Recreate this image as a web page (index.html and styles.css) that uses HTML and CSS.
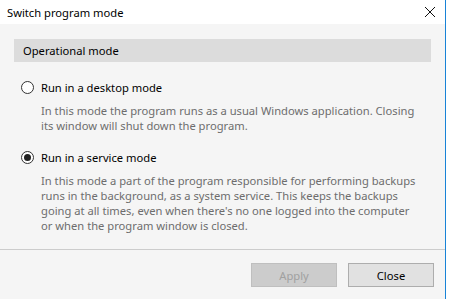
FILE: index.html
```html
<!DOCTYPE html>
<html>
<head>
  <meta charset="UTF-8">
  <title>Switch program mode</title>
  <link rel="stylesheet" href="styles.css">
</head>
<body>
  <div class="window">
    <div class="title-bar">
      <span class="title">Switch program mode</span>
      <svg class="close-x" width="12" height="12" viewBox="0 0 12 12">
        <path d="M1 1 L11 11 M11 1 L1 11" stroke="#111" stroke-width="1" fill="none"/>
      </svg>
    </div>

    <div class="content">
      <div class="section-header">Operational mode</div>

      <div class="option">
        <label class="radio-row">
          <span class="radio"></span>
          <span>Run in a desktop mode</span>
        </label>
        <p class="desc">In this mode the program runs as a usual Windows application. Closing<br>its window will shut down the program.</p>
      </div>

      <div class="option">
        <label class="radio-row">
          <span class="radio checked"></span>
          <span>Run in a service mode</span>
        </label>
        <p class="desc">In this mode a part of the program responsible for performing backups<br>runs in the background, as a system service. This keeps the backups<br>going at all times, even when there's no one logged into the computer<br>or when the program window is closed.</p>
      </div>
    </div>

    <div class="footer">
      <button class="btn" disabled>Apply</button>
      <button class="btn">Close</button>
    </div>
  </div>
</body>
</html>
```

FILE: styles.css
```css
html, body {
  margin: 0;
  background: #ffffff;
  font-family: "Noto Sans", "Open Sans", sans-serif;
  font-size: 11.2px;
  color: #000;
}

.window {
  width: 445px;
  height: 299px;
  border-right: 1px solid #1883d7;
  background: #f5f5f5;
  display: flex;
  flex-direction: column;
}

.title-bar {
  height: 24px;
  background: #ffffff;
  display: flex;
  align-items: center;
  justify-content: space-between;
  padding: 0 9px 0 7px;
}

.title {
  font-size: 11.2px;
}

.content {
  padding: 15px 14px 0 14px;
  flex: 1;
}

.section-header {
  height: 23px;
  line-height: 23px;
  background: #dcdcdc;
  padding-left: 9px;
}

.option {
  padding-left: 7px;
  margin-top: 17px;
}

.option + .option {
  margin-top: 16px;
}

.radio-row {
  display: flex;
  align-items: center;
  gap: 7px;
  height: 16px;
}

.radio {
  width: 11px;
  height: 11px;
  border: 1px solid #333;
  border-radius: 50%;
  background: #fff;
  display: flex;
  align-items: center;
  justify-content: center;
}

.radio.checked::after {
  content: "";
  width: 7px;
  height: 7px;
  border-radius: 50%;
  background: #222;
}

.desc {
  margin: 8px 0 0 20px;
  line-height: 15px;
  color: #6d6d6d;
  white-space: nowrap;
}

.footer {
  border-top: 1px solid #cccccc;
  display: flex;
  justify-content: flex-end;
  gap: 11px;
  padding: 13px 11px 12px 0;
}

.btn {
  width: 86px;
  height: 24px;
  font-family: inherit;
  font-size: 11.2px;
  background: #e1e1e1;
  border: 1px solid #adadad;
  color: #000;
  padding: 0;
}

.btn:disabled {
  background: #cccccc;
  border-color: #bfbfbf;
  color: #a0a0a0;
}
```
